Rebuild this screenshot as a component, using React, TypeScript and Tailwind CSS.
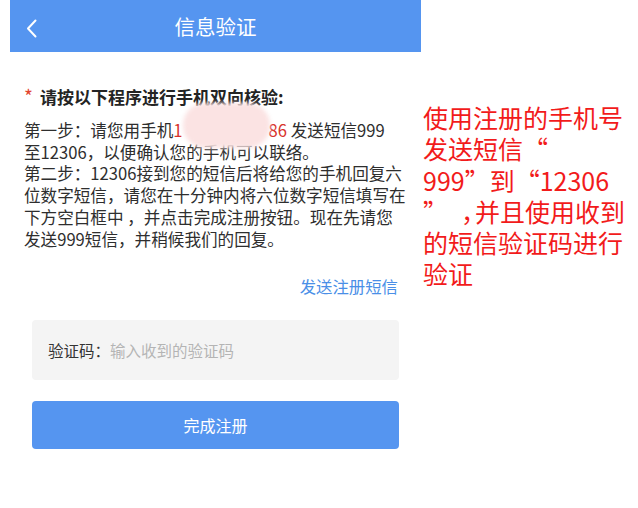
export default function App() {
  return (
    <div className="flex min-h-[508px] w-[638px] bg-white font-['Noto_Sans_CJK_SC',sans-serif]">
      <div className="ml-[10px] w-[411px] shrink-0">
        <header className="relative flex h-[52px] items-center justify-center bg-[#5595f0]">
          <svg
            className="absolute left-[15px] top-[19px]"
            width="13"
            height="19"
            viewBox="0 0 13 19"
            fill="none"
          >
            <path
              d="M10.5 1.5 3 9.5l7.5 8"
              stroke="white"
              strokeWidth="2"
              strokeLinecap="round"
              strokeLinejoin="round"
            />
          </svg>
          <h1 className="text-[20.5px] leading-none text-white">信息验证</h1>
        </header>

        <p className="mt-[33px] pl-[14px] text-[17px] font-bold leading-[22px] text-[#242424]">
          <span className="inline-block w-[16px] text-[19px] font-normal text-[#e2452e]">*</span>
          请按以下程序进行手机双向核验:
        </p>

        <p className="mt-[12px] whitespace-nowrap pl-[14px] text-[16.6px] leading-[21.7px] text-[#2e2e2e]">
          第一步：请您用手机
          <span className="text-[#d8332b]">1</span>
          <span className="relative inline-block h-[21.7px] w-[86px] align-top">
            <span className="absolute -top-[17px] left-0 h-[45px] w-[87px] rounded-[22px] bg-[#fbe3e3] blur-[2px]" />
          </span>
          <span className="text-[#d8332b]">86</span> 发送短信999
          <br />
          至12306，以便确认您的手机可以联络。
          <br />
          第二步：12306接到您的短信后将给您的手机回复六
          <br />
          位数字短信，请您在十分钟内将六位数字短信填写在
          <br />
          下方空白框中 ，并点击完成注册按钮。现在先请您
          <br />
          发送999短信，并稍候我们的回复。
        </p>

        <p className="mt-[25px] pr-[23px] text-right text-[16.4px] leading-[22px] text-[#4a8fe7]">
          发送注册短信
        </p>

        <label className="mx-[22px] mt-[23px] flex h-[60px] items-center rounded-[4px] bg-[#f4f4f4] pl-[16px]">
          <span className="shrink-0 text-[15.5px] text-[#333333]">验证码：</span>
          <input
            className="min-w-0 flex-1 bg-transparent text-[15.5px] text-[#333333] outline-none placeholder:text-[#b4b4b4]"
            placeholder="输入收到的验证码"
          />
        </label>

        <button
          type="button"
          className="mx-[22px] mt-[21px] flex h-[48px] w-[367px] items-center justify-center rounded-[4px] bg-[#5595f0] text-[16px] text-white"
        >
          完成注册
        </button>
      </div>

      <div className="ml-[2px] whitespace-nowrap pt-[102px] text-[25px] leading-[31.3px] text-[#f21b1b]">
        使用注册的手机号
        <br />
        发送短信“
        <br />
        999”到“12306
        <br />
        <span className="inline-block w-[38px]">”</span>
        <span className="inline-block w-[14px]">，</span>并且使用收到
        <br />
        的短信验证码进行
        <br />
        验证
      </div>
    </div>
  );
}
